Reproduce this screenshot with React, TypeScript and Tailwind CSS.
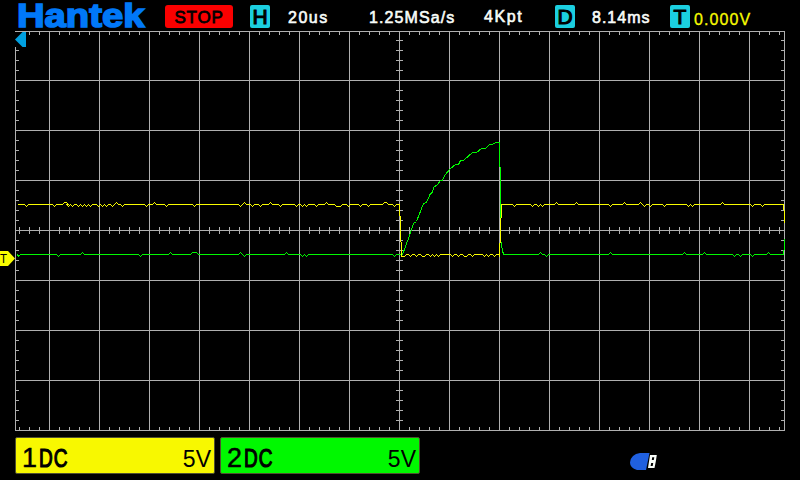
import React from 'react';

type Blip = [number, number, number?];

const DIV_X = Array.from({ length: 15 }, (_, i) => 49 + i * 50);
const DIV_Y = Array.from({ length: 7 }, (_, i) => 80 + i * 50);
const MINOR_X = Array.from({ length: 77 }, (_, i) => 19 + i * 10);
const MINOR_Y = Array.from({ length: 39 }, (_, i) => 40 + i * 10);

// Each blip is [centre x, vertical offset, plateau length].
const CH1_LEFT: Blip[] = [
  [26, 2], [54, 2], [64, -2, 2], [68, 2], [72, 2], [78, 2], [82, 2], [86, 2], [90, 2], [98, 2], [102, 2],
  [106, 2], [112, 2], [116, -2], [122, 2], [146, 2], [154, -2], [166, 2], [194, 2], [240, 2], [244, -2],
  [252, 2], [260, 2], [270, -2], [280, 2], [296, 2], [302, 2], [306, 2], [316, 2], [326, -2], [336, 2, 4],
  [348, 2], [360, 2], [368, 2], [384, -2, 2], [394, 2],
];
const CH1_LOW: Blip[] = [
  [410, 2], [416, 2], [422, 2, 2], [430, 2], [434, 2], [438, 2], [452, 2], [458, 2],
  [464, 2, 2], [472, 2], [484, 2], [488, 2], [494, 2],
];
const CH1_RIGHT: Blip[] = [
  [514, 2], [532, 2], [538, 2], [542, 2], [556, -2], [576, -2], [610, 2], [624, -2], [640, -2], [644, 2],
  [650, 2], [664, 2], [688, 2], [692, 2], [722, -2], [752, 2], [762, 2],
];
const CH2_LEFT: Blip[] = [
  [18, 2], [58, 2], [82, -2], [140, 2], [170, -2], [192, -2, 4], [240, -2], [244, 2], [286, -2], [302, 2],
  [306, 2], [394, 2],
];
const CH2_RIGHT: Blip[] = [
  [540, -2], [546, 2], [610, -2], [684, -2], [704, -2], [734, 2], [740, 2], [752, 2], [768, -2],
];

function level(from: number, to: number, y: number, blips: Blip[]) {
  const pts = [`${from},${y}`];
  blips.forEach(([x, d, w = 0]) => {
    pts.push(`${Math.max(from, x - 2)},${y}`, `${x},${y + d}`);
    if (w) pts.push(`${x + w},${y + d}`);
    pts.push(`${x + w + 2},${y}`);
  });
  pts.push(`${to},${y}`);
  return pts.join(' ');
}

const CH1 = [
  level(17, 399, 204, CH1_LEFT),
  '399,215 400,216 400,241 401,242 401,256 404,256 406,254',
  level(406, 499, 254, CH1_LOW),
  '499,256 499,243 500,242 500,218 501,217',
  level(501, 783, 204, CH1_RIGHT),
  '783,209 784,210 784,222',
].join(' ');

const CH2 = [
  level(17, 402, 254, CH2_LEFT),
  '405,246 409,235 413,223 416,221 423,203 426,202 430,193 432,192 433,187 437,184 440,180 442,180 444,175',
  '450,168 455,164 458,164 460,160 463,160 472,152 476,152 481,148 485,148 489,144 492,144 495,142 499,142',
  '499,166 500,167 500,241 501,242 501,245 502,250 503,254',
  level(503, 783, 254, CH2_RIGHT),
  '783,250 784,249 784,238',
].join(' ');

function Badge({ children }: { children: string }) {
  return (
    <div className="flex h-[23px] w-5 shrink-0 items-center justify-center rounded-[2px] bg-[#1bcfe0] pt-px text-[21px] leading-[22px] text-black [-webkit-text-stroke:1.1px_black]">
      {children}
    </div>
  );
}

function Logo() {
  return (
    <svg className="ml-4 h-[31px] w-[130px] shrink-0 overflow-visible" viewBox="0 0 130 31">
      <text
        x="1" y="26.5" textLength="127.5" lengthAdjust="spacingAndGlyphs"
        className="fill-[#0078f8] stroke-[#0078f8] text-[33px] font-bold" strokeWidth="1.6"
      >
        Hantek
      </text>
    </svg>
  );
}

function Header() {
  return (
    <header className="flex h-[31px] items-start whitespace-nowrap text-[16px] leading-[23px]">
      <Logo />
      <div className="ml-[19px] mt-[5px] h-[23px] w-[68px] shrink-0 rounded-[3px] bg-[#fa0000] pt-px text-center text-[17px] tracking-[0.8px] text-black [-webkit-text-stroke:0.8px_black]">
        STOP
      </div>
      <div className="ml-[17px] mt-[5px]"><Badge>H</Badge></div>
      <div className="flex text-[#f8fcf8] [-webkit-text-stroke:0.6px_#f8fcf8]">
        <div className="ml-[18px] mt-[6px] w-[81px] tracking-[1.5px]">20us</div>
        <div className="mt-[6px] w-[115px] tracking-[1.1px]">1.25MSa/s</div>
        <div className="mt-[5px] w-[71px] tracking-[1.6px]">4Kpt</div>
      </div>
      <div className="mt-[5px]"><Badge>D</Badge></div>
      <div className="ml-[17px] mt-[6px] w-[78px] tracking-[1px] text-[#f8fcf8] [-webkit-text-stroke:0.6px_#f8fcf8]">8.14ms</div>
      <div className="mt-[5px]"><Badge>T</Badge></div>
      <div className="ml-[4px] mt-[8px] text-[16px] tracking-[1.1px] text-[#f8fc00] [-webkit-text-stroke:0.3px_#f8fc00]">0.000V</div>
    </header>
  );
}

function Scope() {
  return (
    <svg className="block h-[401px] w-[800px] shrink-0" viewBox="0 31 800 401" shapeRendering="crispEdges">
      <g className="fill-[#b0b0b0]">
        <rect x="15" y="31" width="770" height="1" />
        <rect x="15" y="430" width="770" height="1" />
        <rect x="15" y="47" width="1" height="384" />
        <rect x="784" y="31" width="1" height="400" />
        {DIV_X.map((x) => <rect key={x} x={x} y="31" width="1" height="400" />)}
        {DIV_Y.map((y) => <rect key={y} x="15" y={y} width="770" height="1" />)}
        {MINOR_X.map((x) => (
          <g key={x}>
            {x > 26 && <rect x={x} y="32" width="1" height="3" />}
            <rect x={x} y="227" width="1" height="7" />
            <rect x={x} y="427" width="1" height="3" />
          </g>
        ))}
        {MINOR_Y.map((y) => (
          <g key={y}>
            {y > 46 && <rect x="16" y={y} width="3" height="1" />}
            <rect x="396" y={y} width="7" height="1" />
            <rect x="781" y={y} width="3" height="1" />
          </g>
        ))}
      </g>
      <path d="M15 39.5 22.5 32H26V47H22.5Z" className="fill-[#00a0e0]" shapeRendering="auto" />
      <g fill="none" strokeWidth="1" transform="translate(.5 .5)">
        <polyline points={CH2} className="stroke-[#00f800]" />
        <polyline points={CH1} className="stroke-[#f8fc00]" />
      </g>
      <g shapeRendering="auto">
        <path d="M0 251H8L15 258.5 8 266H0Z" className="fill-[#f8fc00]" />
        <text x="0" y="263" textLength="7" lengthAdjust="spacingAndGlyphs" className="fill-black text-[13px]">T</text>
      </g>
    </svg>
  );
}

function Channel({ id, tone }: { id: string; tone: string }) {
  return (
    <div className={`flex h-[37px] w-[200px] shrink-0 rounded-[2px] border border-[#505030] text-black ${tone}`}>
      <svg className="h-[35px] w-[60px] overflow-visible" viewBox="0 0 60 35">
        <text x="6" y="28.5" className="fill-black stroke-black text-[28px]" strokeWidth="0.5" textLength="15" lengthAdjust="spacingAndGlyphs">{id}</text>
        <text
          transform="translate(23 28.5) scale(.76 1)"
          className="fill-black stroke-black text-[25px] tracking-[1.5px]" strokeWidth="1.2"
        >
          DC
        </text>
      </svg>
      <span className="ml-auto mr-[3px] mt-[8px] text-[23px] leading-[26px]">5V</span>
    </div>
  );
}

function Footer() {
  return (
    <footer className="flex h-12 items-start pl-[15px] pt-[5px]">
      <Channel id="1" tone="bg-[#f8f800]" />
      <div className="w-[5px] shrink-0" />
      <Channel id="2" tone="bg-[#00f800]" />
      <svg className="ml-[210px] mt-[14px] h-5 w-7 shrink-0" viewBox="0 0 28 20">
        <path d="M10 2H19.5L16 19H7Q0 17 0 11.5 1 3 10 2Z" className="fill-[#2060e0]" />
        <path
          fillRule="evenodd" className="fill-[#f8fcf8]"
          d="M20 4H26.8L25.8 10.5 24.5 17H18L19 10.5ZM22.2 6.2 21.8 9H23.8L24.3 6.2ZM21.2 12 20.6 15H22.7L23.2 12Z"
        />
      </svg>
    </footer>
  );
}

export default function App() {
  return (
    <main className="flex h-[480px] w-[800px] flex-col overflow-hidden bg-black font-['Liberation_Sans',Arial,sans-serif]">
      <Header />
      <Scope />
      <Footer />
    </main>
  );
}
